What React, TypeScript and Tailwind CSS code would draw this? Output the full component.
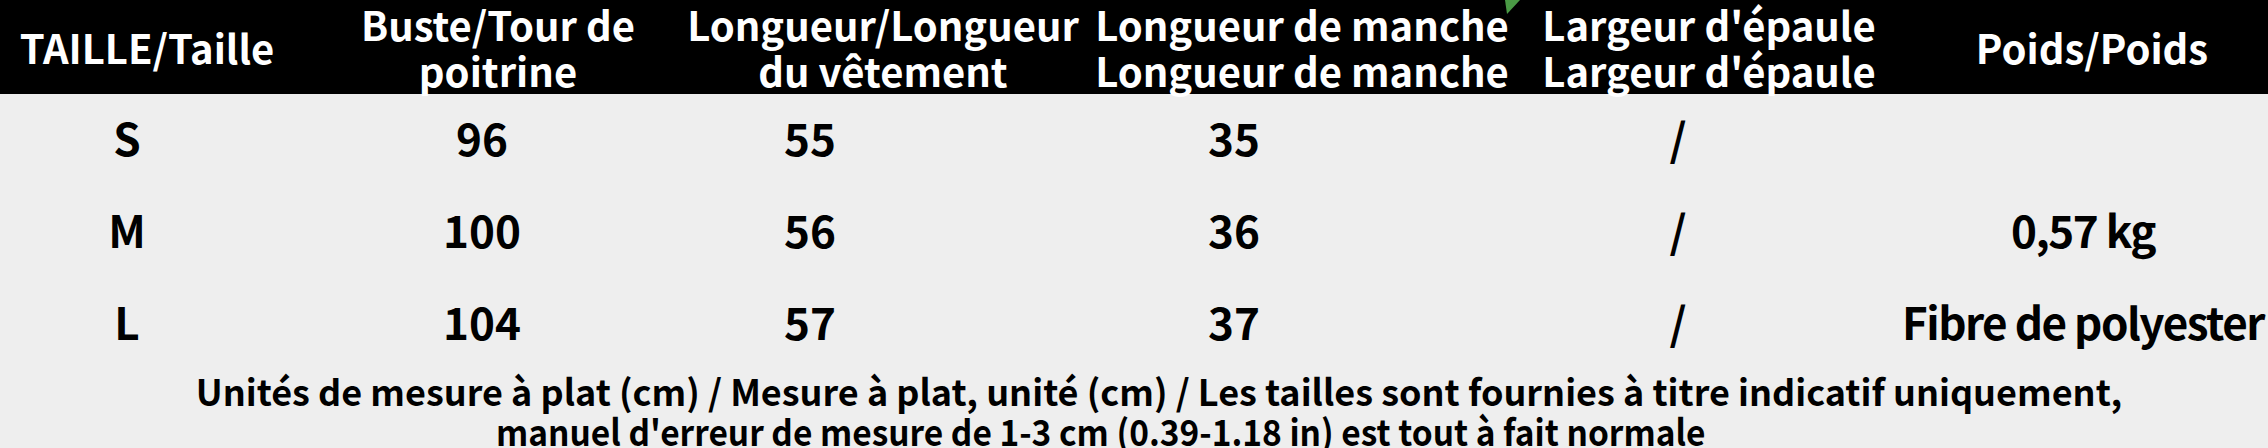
import React from 'react';

const font = { fontFamily: '"Noto Sans CJK SC", "Noto Sans", sans-serif' };

const rows = [
    { size: 'S', chest: '96', length: '55', sleeve: '35', shoulder: '/', extra: '' },
    { size: 'M', chest: '100', length: '56', sleeve: '36', shoulder: '/', extra: '0,57 kg' },
    { size: 'L', chest: '104', length: '57', sleeve: '37', shoulder: '/', extra: 'Fibre de polyester' },
];

const App: React.FC = () => {
    return (
        <div className="relative w-[2268px] h-[448px] overflow-hidden bg-[#eeeeee] text-black" style={font}>
            {/* header */}
            <div className="grid grid-cols-[294px_408px_362px_476px_338px_390px] h-[94px] bg-black text-white font-bold text-[40px] leading-[46px] whitespace-nowrap">
                <div className="flex items-center justify-center">TAILLE/Taille</div>
                <div className="flex flex-col items-center justify-center">
                    <span>Buste/Tour de</span>
                    <span>poitrine</span>
                </div>
                <div className="flex flex-col items-center justify-center">
                    <span>Longueur/Longueur</span>
                    <span>du vêtement</span>
                </div>
                <div className="flex flex-col items-center justify-center">
                    <span>Longueur de manche</span>
                    <span>Longueur de manche</span>
                </div>
                <div className="flex flex-col items-center justify-center">
                    <span>Largeur d'épaule</span>
                    <span>Largeur d'épaule</span>
                </div>
                <div className="flex items-center justify-center pl-[38px]">Poids/Poids</div>
            </div>

            <svg className="absolute left-[1500px] top-0" width="24" height="20" viewBox="0 0 24 20">
                <polygon points="5,0 20,0 7,14" fill="#4a9a45" />
            </svg>

            {/* body */}
            <div className="flex flex-col -mt-[3px] font-bold text-[44px] whitespace-nowrap">
                {rows.map((r) => (
                    <div key={r.size} className="grid grid-cols-[254px_456px_200px_648px_240px_470px] h-[92px] items-center text-center">
                        <div>{r.size}</div>
                        <div>{r.chest}</div>
                        <div>{r.length}</div>
                        <div>{r.sleeve}</div>
                        <div>{r.shoulder}</div>
                        <div className="pl-[100px] tracking-[-1.5px]">{r.extra}</div>
                    </div>
                ))}
            </div>

            {/* note */}
            <div className="flex flex-col mt-[3px] font-bold text-[36px] leading-[40px] whitespace-nowrap">
                <div className="pl-[50px] text-center">
                    Unités de mesure à plat (cm) / Mesure à plat, unité (cm) / Les tailles sont fournies à titre indicatif uniquement,
                </div>
                <div className="pl-[496px]">
                    <span className="inline-block origin-left scale-x-[0.93]">
                        manuel d'erreur de mesure de 1-3 cm (0.39-1.18 in) est tout à fait normale
                    </span>
                </div>
            </div>
        </div>
    );
};

export default App;
